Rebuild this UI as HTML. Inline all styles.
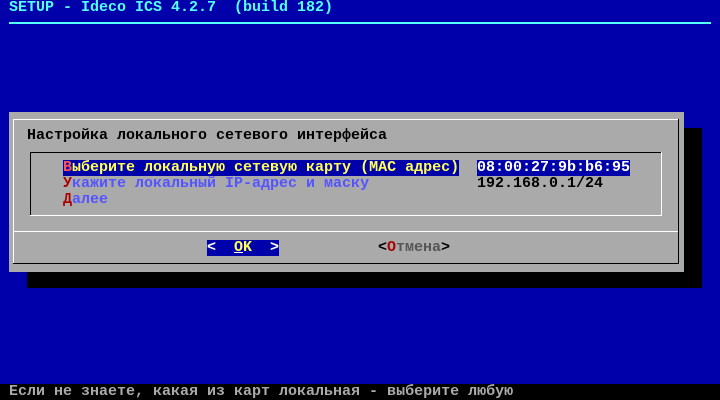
<!DOCTYPE html>
<html><head><meta charset="utf-8"><style>
*{margin:0;padding:0}
body{width:720px;height:400px;background:#0000aa;position:relative;overflow:hidden;font-family:"Liberation Mono","DejaVu Sans Mono",monospace;font-size:15px;line-height:16px;font-weight:bold}
.a{position:absolute;white-space:pre}
.b{position:absolute}
</style></head><body>
<div class="a" style="left:9px;top:0;color:#55ffff">SETUP - Ideco ICS 4.2.7  (build 182)</div>
<div class="b" style="left:9px;top:22px;width:702px;height:2px;background:#55ffff"></div>
<!-- shadow -->
<div class="b" style="left:27px;top:128px;width:675px;height:160px;background:#000"></div>
<!-- dialog -->
<div class="b" style="left:9px;top:112px;width:675px;height:160px;background:#aaaaaa"></div>
<div class="b" style="left:13px;top:119px;width:666px;height:1px;background:#fff"></div>
<div class="b" style="left:13px;top:119px;width:1px;height:145px;background:#fff"></div>
<div class="b" style="left:678px;top:119px;width:1px;height:145px;background:#000"></div>
<div class="b" style="left:13px;top:263px;width:666px;height:1px;background:#000"></div>
<div class="b" style="left:14px;top:231px;width:664px;height:1px;background:#fff"></div>
<!-- inner box -->
<div class="b" style="left:30px;top:152px;width:632px;height:1px;background:#000"></div>
<div class="b" style="left:30px;top:152px;width:1px;height:64px;background:#000"></div>
<div class="b" style="left:661px;top:152px;width:1px;height:64px;background:#fff"></div>
<div class="b" style="left:30px;top:215px;width:632px;height:1px;background:#fff"></div>
<div class="a" style="left:27px;top:128px;color:#000">Настройка локального сетевого интерфейса</div>
<div class="a" style="left:63px;top:160px;background:#0000aa;color:#ffff55"><span style="color:#ff5555">В</span>ыберите локальную сетевую карту (MAC адрес)</div>
<div class="a" style="left:477px;top:160px;background:#0000aa;color:#fff">08:00:27:9b:b6:95</div>
<div class="a" style="left:63px;top:176px;color:#5555ff"><span style="color:#aa0000">У</span>кажите локальный IP-адрес и маску</div>
<div class="a" style="left:477px;top:176px;color:#000">192.168.0.1/24</div>
<div class="a" style="left:63px;top:192px;color:#5555ff"><span style="color:#aa0000">Д</span>алее</div>
<div class="a" style="left:207px;top:240px;background:#0000aa;color:#fff">&lt;  <span style="color:#ffff55;text-decoration:underline;text-decoration-color:#fff">O</span><span style="color:#ffff55">K</span>  &gt;</div>
<div class="a" style="left:378px;top:240px;color:#555"><span style="color:#000">&lt;</span><span style="color:#aa0000">О</span>тмена<span style="color:#000">&gt;</span></div>
<div class="b" style="left:0;top:384px;width:720px;height:16px;background:#000"></div>
<div class="a" style="left:9px;top:384px;color:#aaaaaa">Если не знаете, какая из карт локальная - выберите любую</div>
</body></html>
